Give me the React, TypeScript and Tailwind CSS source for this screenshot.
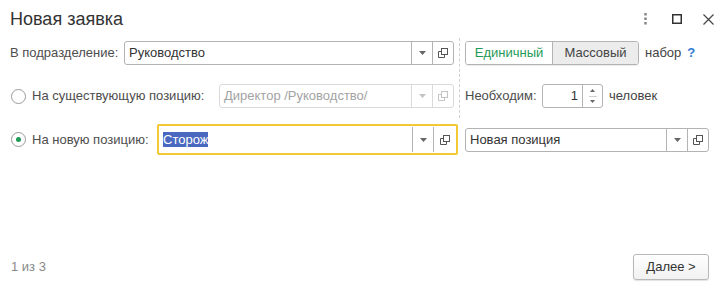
import React from 'react';

const DropArrow: React.FC<{ dim?: boolean }> = ({ dim }) => (
  <svg width="7" height="4" viewBox="0 0 7 4">
    <path d="M0 0 L7 0 L3.5 4 Z" fill={dim ? '#c4c4c4' : '#666'} />
  </svg>
);

const OpenIcon: React.FC<{ dim?: boolean }> = ({ dim }) => (
  <svg width="10" height="10" viewBox="0 0 10 10" fill="none" stroke={dim ? '#c4c4c4' : '#555'} strokeWidth="1">
    <rect x="3.5" y="0.5" width="6" height="6" />
    <path d="M3.5 3.5 H0.5 V9.5 H6.5 V6.5" />
  </svg>
);

interface FieldProps {
  value: string;
  width: string;
  dim?: boolean;
}

const Field: React.FC<FieldProps> = ({ value, width, dim }) => (
  <div
    className={`${width} h-full flex items-stretch rounded-[3px] border bg-white ${
      dim ? 'border-[#dadada]' : 'border-[#b3b3b3]'
    }`}
  >
    <div className={`flex-1 flex items-center pl-[4px] text-[13px] ${dim ? 'text-[#a3a3a3]' : 'text-[#333]'}`}>
      {value}
    </div>
    <div className={`w-[21px] flex items-center justify-center border-l ${dim ? 'border-[#dadada]' : 'border-[#b3b3b3]'}`}>
      <DropArrow dim={dim} />
    </div>
    <div className={`w-[21px] flex items-center justify-center border-l ${dim ? 'border-[#dadada]' : 'border-[#b3b3b3]'}`}>
      <OpenIcon dim={dim} />
    </div>
  </div>
);

const Radio: React.FC<{ checked?: boolean }> = ({ checked }) => (
  <div className="w-[15px] h-[15px] rounded-full border border-[#9a9a9a] bg-white flex items-center justify-center">
    {checked && <div className="w-[5px] h-[5px] rounded-full bg-[#1f9a57]" />}
  </div>
);

export default function App() {
  return (
    <div className="w-[724px] h-[291px] bg-white flex flex-col font-['Arial','Liberation_Sans',sans-serif] text-[13px] text-[#4d4d4d]">
      {/* Header */}
      <div className="h-[38px] flex items-center justify-between pl-[10px] pr-[10px] shrink-0">
        <h1 className="text-[18px] text-[#333]">Новая заявка</h1>
        <div className="flex items-center">
          <svg width="3" height="12" viewBox="0 0 3 12" className="mr-[25px]">
            <rect x="0.25" y="0" width="2.5" height="2.5" fill="#888" />
            <rect x="0.25" y="4.5" width="2.5" height="2.5" fill="#888" />
            <rect x="0.25" y="9" width="2.5" height="2.5" fill="#888" />
          </svg>
          <svg width="10" height="10" viewBox="0 0 10 10" className="mr-[21px]">
            <rect x="0.75" y="0.75" width="8.5" height="8.5" fill="none" stroke="#333" strokeWidth="1.5" />
          </svg>
          <svg width="11" height="11" viewBox="0 0 11 11">
            <path d="M0.5 0.5 L10.5 10.5 M10.5 0.5 L0.5 10.5" stroke="#444" strokeWidth="1.2" />
          </svg>
        </div>
      </div>

      {/* Form */}
      <div className="pt-[3px] pl-[10px] grid grid-cols-[444px_11px_1fr] grid-rows-[24px_24px_31px] gap-y-[19px]">
        {/* Row 1 */}
        <div className="flex items-center h-full">
          <span className="w-[114px]">В подразделение:</span>
          <Field value="Руководство" width="w-[330px]" />
        </div>
        <div className="row-span-2 flex justify-center -mt-[3px] -mb-[10px]">
          <div className="w-0 h-full border-l border-dashed border-[#cfcfcf]" />
        </div>
        <div className="flex items-center h-full">
          <div className="flex h-full rounded-[3px] border border-[#b3b3b3] overflow-hidden shadow-[0_1px_1px_rgba(0,0,0,0.08)]">
            <div className="w-[86px] flex items-center justify-center bg-white text-[#1f9a57]">Единичный</div>
            <div className="w-[86px] flex items-center justify-center bg-[#ececec] border-l border-[#b3b3b3] text-[#444]">
              Массовый
            </div>
          </div>
          <span className="ml-[6px] text-[#444]">набор</span>
          <span className="ml-[6px] text-[#2f7bd0] font-bold">?</span>
        </div>

        {/* Row 2 */}
        <div className="flex items-center h-full">
          <div className="w-[22px] pl-[1px] flex items-center">
            <Radio />
          </div>
          <span className="w-[187px]">На существующую позицию:</span>
          <Field value="Директор /Руководство/" width="w-[235px]" dim />
        </div>
        <div className="flex items-center h-full">
          <span className="w-[77px]">Необходим:</span>
          <div className="w-[61px] h-full flex rounded-[3px] border border-[#b3b3b3] bg-white">
            <div className="flex-1 flex items-center justify-end pr-[4px] text-[#333]">1</div>
            <div className="w-[20px] flex flex-col border-l border-[#b3b3b3]">
              <div className="flex-1 flex items-center justify-center">
                <svg width="5" height="3" viewBox="0 0 5 3">
                  <path d="M0 3 L5 3 L2.5 0 Z" fill="#666" />
                </svg>
              </div>
              <div className="mx-auto w-[8px] border-t border-[#cfcfcf]" />
              <div className="flex-1 flex items-center justify-center">
                <svg width="5" height="3" viewBox="0 0 5 3">
                  <path d="M0 0 L5 0 L2.5 3 Z" fill="#666" />
                </svg>
              </div>
            </div>
          </div>
          <span className="ml-[6px] text-[#444]">человек</span>
        </div>

        {/* Row 3 */}
        <div className="col-span-2 flex items-center h-full -mt-[3px]">
          <div className="w-[22px] pl-[1px] flex items-center">
            <Radio checked />
          </div>
          <span className="w-[125px]">На новую позицию:</span>
          <div className="w-[301px] h-full border-2 border-[#f2c933] rounded-[2px] flex">
            <div className="flex-1 flex items-stretch bg-white">
              <div className="flex-1 flex items-center pl-[4px] text-[13px]">
                <span className="bg-[#4a68c0] text-white leading-[15px]">Сторож</span>
              </div>
              <div className="w-[21px] flex items-center justify-center border-l border-[#b3b3b3] my-[1px]">
                <DropArrow />
              </div>
              <div className="w-[23px] flex items-center justify-center border-l border-[#b3b3b3] my-[1px]">
                <OpenIcon />
              </div>
            </div>
          </div>
        </div>
        <div className="flex items-center h-full -mt-[3px]">
          <div className="h-[24px]">
            <Field value="Новая позиция" width="w-[244px]" />
          </div>
        </div>
      </div>

      {/* Footer */}
      <div className="mt-auto flex items-center justify-between pl-[11px] pr-[15px] pb-[11px] h-[37px]">
        <span className="text-[#888]">1 из 3</span>
        <button className="w-[76px] h-[26px] rounded-[3px] border border-[#b8b8b8] bg-gradient-to-b from-white to-[#f1f1f1] shadow-[0_1px_1px_rgba(0,0,0,0.12)] text-[#333] text-[13px]">
          Далее &gt;
        </button>
      </div>
    </div>
  );
}
